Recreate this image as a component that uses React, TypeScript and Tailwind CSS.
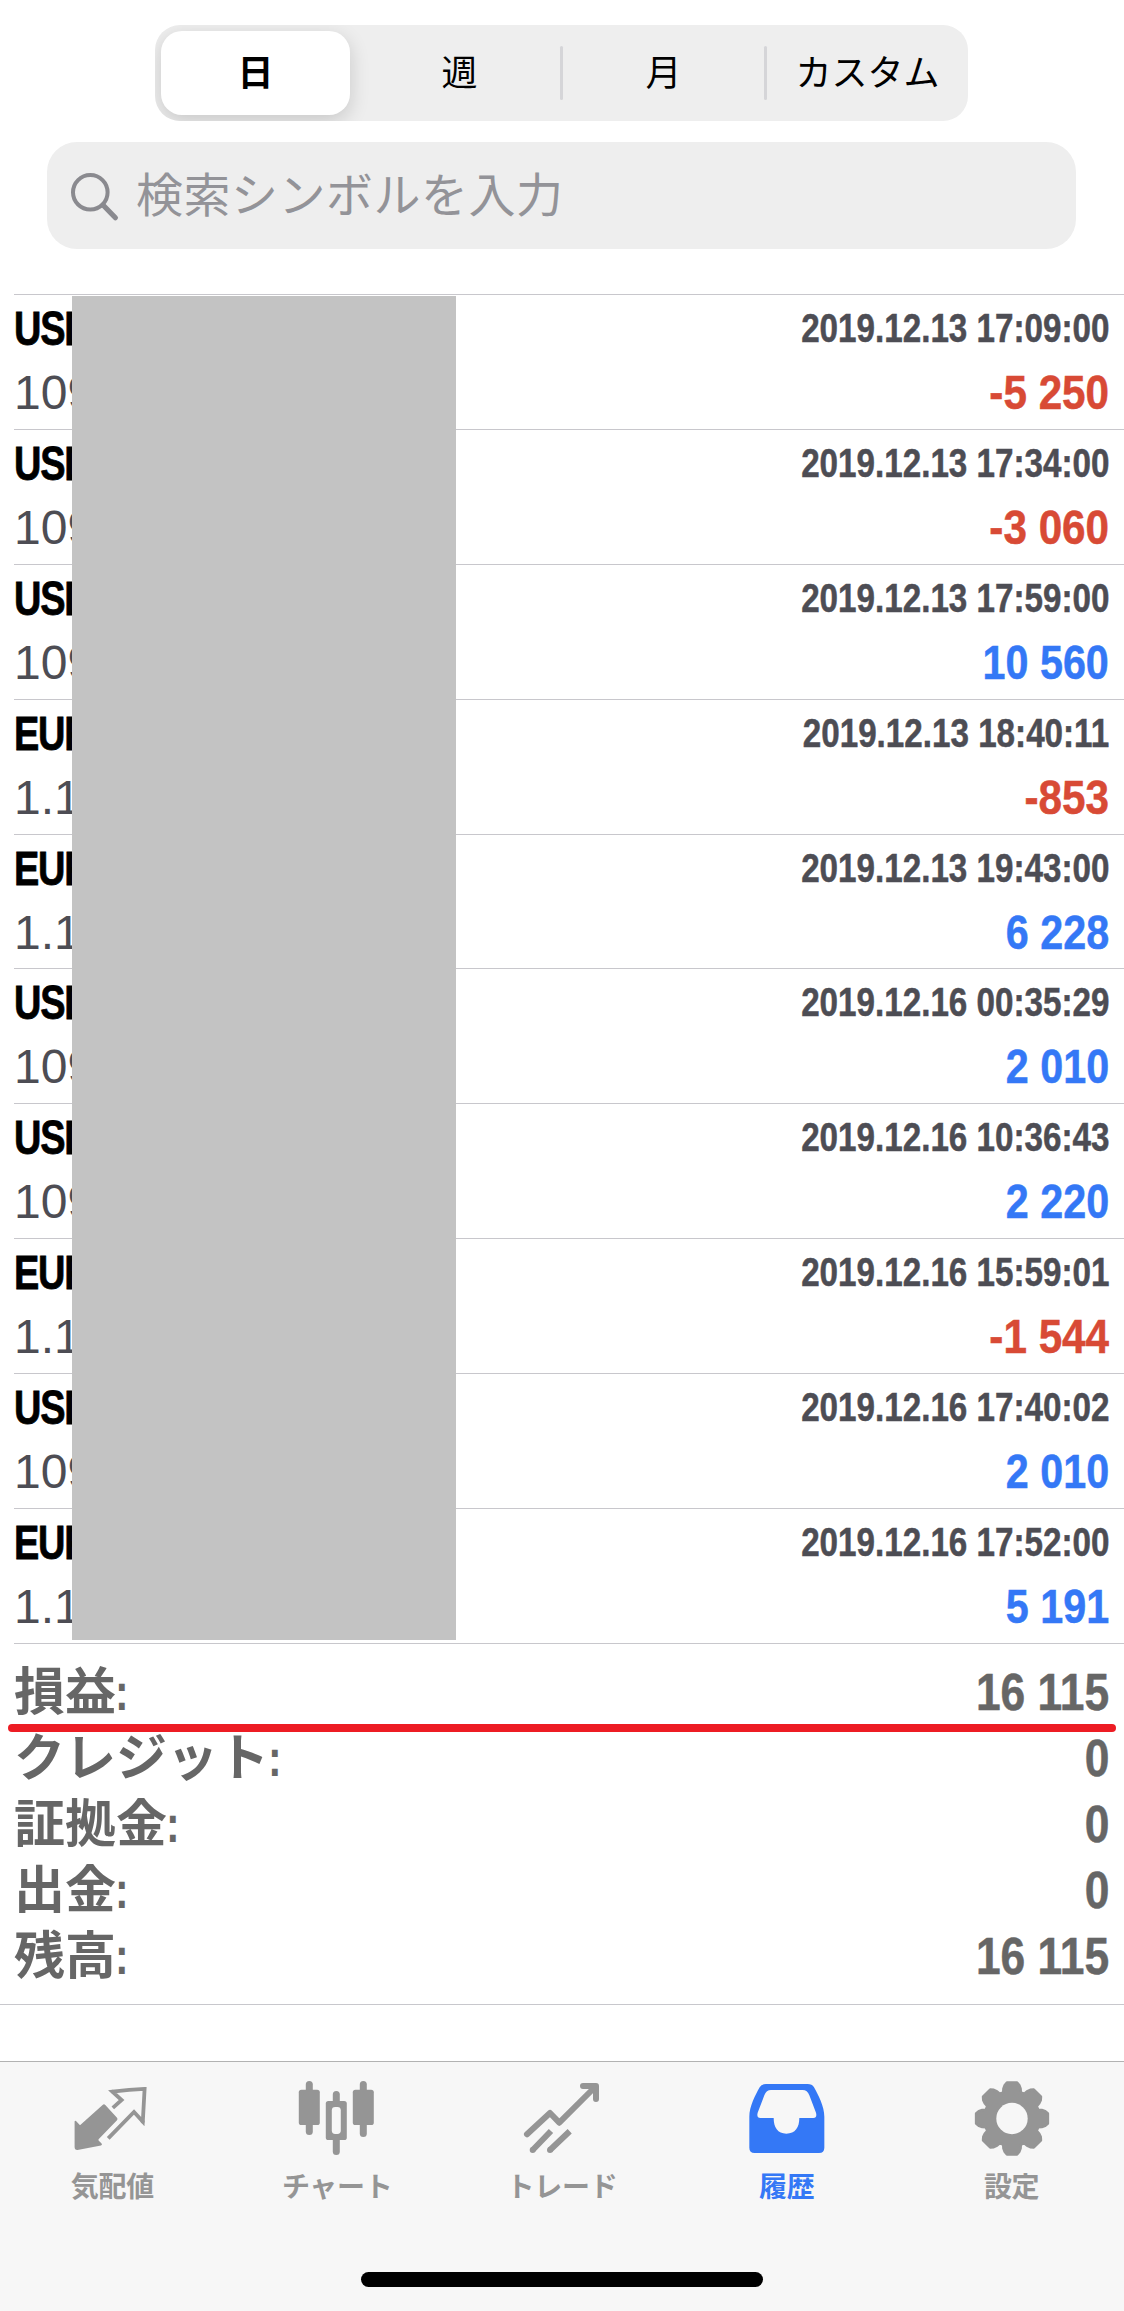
import type { ReactNode } from "react";

interface Deal {
  symbol: string;
  price: string;
  time: string;
  profit: string;
}

const deals: Deal[] = [
  { symbol: "USD", price: "109", time: "2019.12.13 17:09:00", profit: "-5 250" },
  { symbol: "USD", price: "109", time: "2019.12.13 17:34:00", profit: "-3 060" },
  { symbol: "USD", price: "109", time: "2019.12.13 17:59:00", profit: "10 560" },
  { symbol: "EUR", price: "1.1", time: "2019.12.13 18:40:11", profit: "-853" },
  { symbol: "EUR", price: "1.1", time: "2019.12.13 19:43:00", profit: "6 228" },
  { symbol: "USD", price: "109", time: "2019.12.16 00:35:29", profit: "2 010" },
  { symbol: "USD", price: "109", time: "2019.12.16 10:36:43", profit: "2 220" },
  { symbol: "EUR", price: "1.1", time: "2019.12.16 15:59:01", profit: "-1 544" },
  { symbol: "USD", price: "109", time: "2019.12.16 17:40:02", profit: "2 010" },
  { symbol: "EUR", price: "1.1", time: "2019.12.16 17:52:00", profit: "5 191" },
];

const summary = [
  { label: "損益", value: "16 115" },
  { label: "クレジット", value: "0" },
  { label: "証拠金", value: "0" },
  { label: "出金", value: "0" },
  { label: "残高", value: "16 115" },
];

function SearchIcon() {
  return (
    <svg width="52" height="52" viewBox="0 0 52 52" fill="none" stroke="#8a8a8f" strokeLinecap="round">
      <circle cx="22.3" cy="22.3" r="17.3" strokeWidth="4" />
      <path d="M35 35 47.4 47.7" strokeWidth="5.2" />
    </svg>
  );
}

function QuotesIcon() {
  return (
    <svg width="84" height="80" viewBox="0 0 84 80" fill="currentColor">
      <path d="M32.6 27Q34 25.7 35.3 27L47 39.7Q48 41 47 42.3L28.6 61.3Q28.2 62 28.8 62.7L31.6 65.4Q32.6 67 31 67.5L7.5 72Q4.6 72.2 4.6 69V43.4Q5 42.3 6 43L10 47.3Z" />
      <path
        d="M42.8 29.8 51.6 22 42.4 13.6Q60 11.6 74.6 10.9L72.8 43.6 64 34 38.2 60.4"
        fill="none"
        stroke="currentColor"
        strokeWidth="3.8"
      />
      <circle cx="42.6" cy="13.6" r="1.9" />
      <circle cx="72.6" cy="43.6" r="2" />
    </svg>
  );
}

function ChartIcon() {
  return (
    <svg width="84" height="80" viewBox="0 0 84 80" fill="currentColor">
      <rect x="10.8" y="3" width="7" height="54" rx="3.5" />
      <rect x="3.8" y="11.7" width="21" height="35.3" rx="2.6" />
      <rect x="37.8" y="13" width="7" height="64" rx="3.5" />
      <rect x="30.8" y="23" width="21" height="39" rx="2.6" />
      <rect x="36.8" y="29" width="9" height="27" rx="3.4" fill="#f7f7f7" />
      <rect x="64.8" y="3" width="7" height="56" rx="3.5" />
      <rect x="57.8" y="11.7" width="21" height="35.3" rx="2.6" />
    </svg>
  );
}

function TradeIcon() {
  return (
    <svg width="84" height="80" viewBox="0 0 84 80" fill="none" stroke="currentColor" strokeWidth="6" strokeLinejoin="round">
      <path d="M7 56.3 30 35 39.3 44.7 74 10M63 8H76V21" strokeLinecap="round" />
      <path d="M12.7 72 31 53M30 72 49.7 53.3" />
      <g fill="currentColor" stroke="none">
        <circle cx="12.7" cy="72" r="3" />
        <circle cx="30" cy="72" r="3" />
      </g>
    </svg>
  );
}

function HistoryIcon() {
  return (
    <svg width="84" height="80" viewBox="0 0 252 240" fill="currentColor" fillRule="evenodd">
      <path d="M13 116C13 86 31 51 44 28Q50 18 63 18H188Q201 18 207 28C220 51 238 86 238 116V209Q238 225 222 225H29Q13 225 13 209ZM78 36Q64 36 58 52L38 104Q34 120 46 120H86C86 148 98 167 124 167C151 167 163 148 163 120H205Q217 120 213 104L193 52Q187 36 173 36Z" />
    </svg>
  );
}

// 8 teeth around (42, 40.5)
const gearPoints = Array.from({ length: 8 })
  .flatMap((_, i) =>
    [
      [27.6, -18.5],
      [31, -16],
      [34, -12.5],
      [36.2, -8],
      [36.2, 8],
      [34, 12.5],
      [31, 16],
      [27.6, 18.5],
    ].map(([r, a]) => {
      const t = ((i * 45 + a) * Math.PI) / 180;
      return `${(42 + r * Math.sin(t)).toFixed(2)},${(40.5 - r * Math.cos(t)).toFixed(2)}`;
    })
  )
  .join(" ");

function SettingsIcon() {
  return (
    <svg width="84" height="80" viewBox="0 0 84 80">
      <polygon points={gearPoints} fill="currentColor" stroke="currentColor" strokeWidth="2.6" strokeLinejoin="round" />
      <circle cx="42" cy="40.5" r="15.7" fill="#f7f7f7" />
    </svg>
  );
}

function Segment({ children }: { children: ReactNode }) {
  return <div className="flex flex-1 items-center justify-center pt-0.5 text-[36px] leading-none">{children}</div>;
}

function DealRow({ symbol, price, time, profit }: Deal) {
  return (
    <div className="ml-[14px] h-[134.9px] border-t border-[#c8c7cc] pr-[15px]">
      <div className="flex justify-between">
        <span className="origin-left scale-x-[0.79] text-[48px] leading-[68px] font-bold tracking-[-1.5px] text-black [-webkit-text-stroke:0.8px]">
          {symbol}
        </span>
        <span className="origin-right scale-x-[0.83] text-[40px] leading-[66px] font-bold text-[#4d4d54] [-webkit-text-stroke:0.5px]">
          {time}
        </span>
      </div>
      <div className="flex justify-between text-[48px] leading-[59px]">
        <span className="text-[#4d4d54]">{price}</span>
        <span
          className={`origin-right font-bold [-webkit-text-stroke:0.5px] ${
            profit.startsWith("-") ? "scale-x-[0.88] text-[#d84a35]" : "scale-x-[0.86] text-[#3478f6]"
          }`}
        >
          {profit}
        </span>
      </div>
    </div>
  );
}

function Tab({ icon, label, active }: { icon: ReactNode; label: string; active?: boolean }) {
  return (
    <div className={`flex flex-1 flex-col items-center pt-4 ${active ? "text-[#3478f6]" : "text-[#959595]"}`}>
      {icon}
      <span className="mt-[15px] text-[28px] leading-[30px] font-bold tracking-[-0.3px]">{label}</span>
    </div>
  );
}

export default function App() {
  return (
    <div className="flex h-[2311px] w-[1124px] flex-col overflow-hidden bg-white font-['Liberation_Sans','Noto_Sans_CJK_JP',sans-serif]">
      <header className="h-[294px] shrink-0 pt-[25px]">
        <div className="ml-[155px] flex h-24 w-[813px] overflow-hidden rounded-[25px] bg-[#eeeeee] text-black">
          <div className="flex w-[204px] py-1.5 pl-1.5">
            <div className="flex w-[189px] items-center justify-center rounded-[21px] bg-white pt-0.5 text-[36px] leading-none font-bold shadow-[0_6px_20px_rgba(0,0,0,0.16)]">
              日
            </div>
          </div>
          <Segment>週</Segment>
          <div className="my-[21px] w-[3px] rounded-full bg-[#d5d5d8]" />
          <Segment>月</Segment>
          <div className="my-[21px] w-[3px] rounded-full bg-[#d5d5d8]" />
          <Segment>カスタム</Segment>
        </div>
        <div className="mt-[21px] ml-[47px] flex h-[107px] w-[1029px] items-center rounded-[30px] bg-[#eeeeee] pl-[21px]">
          <SearchIcon />
          <span className="ml-4 text-[47px] leading-none tracking-[0.5px] text-[#939398]">検索シンボルを入力</span>
        </div>
      </header>

      <main className="relative h-[1349px] shrink-0">
        {deals.map((deal) => (
          <DealRow key={deal.time} {...deal} />
        ))}
        <div className="absolute top-[2px] left-[72px] h-[1344px] w-[384px] bg-[#c3c3c3]" />
      </main>

      <section className="relative h-[362px] shrink-0 border-b border-[#c8c7cc] text-[51px] leading-[66px] font-bold text-[#666666]">
        <div className="ml-[14px] border-t border-[#c8c7cc] pt-4 pr-[15px]">
          {summary.map((item) => (
            <div key={item.label} className="flex justify-between">
              <span className="flex">
                {item.label}
                <span className="-ml-px origin-left scale-x-[0.8]">:</span>
              </span>
              <span className="origin-right scale-x-[0.87] [-webkit-text-stroke:0.5px]">{item.value}</span>
            </div>
          ))}
        </div>
        <div className="absolute top-[81px] left-2 h-2 w-[1108px] rounded-full bg-[#ed1c24]" />
      </section>

      <nav className="mt-14 flex flex-1 flex-col border-t border-[#b2b2b2] bg-[#f7f7f7]">
        <div className="flex">
          <Tab icon={<QuotesIcon />} label="気配値" />
          <Tab icon={<ChartIcon />} label="チャート" />
          <Tab icon={<TradeIcon />} label="トレード" />
          <Tab icon={<HistoryIcon />} label="履歴" active />
          <Tab icon={<SettingsIcon />} label="設定" />
        </div>
        <div className="mx-auto mt-auto mb-6 h-[15px] w-[402px] rounded-full bg-black" />
      </nav>
    </div>
  );
}
